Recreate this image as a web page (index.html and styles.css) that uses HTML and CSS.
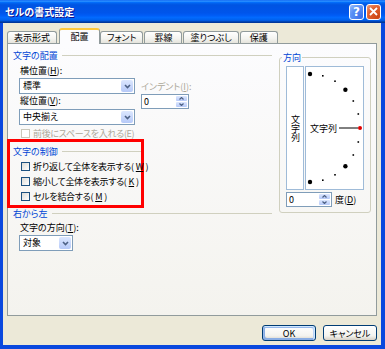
FILE: index.html
```html
<!DOCTYPE html>
<html lang="ja">
<head>
    <meta charset="UTF-8">
    <title>セルの書式設定</title>
    <link rel="stylesheet" href="styles.css">
</head>
<body>
    <div class="window">
        <div class="titlebar">
            <span class="title">セルの書式設定</span>
            <span class="tbtn help">?</span>
            <span class="tbtn close">
                <svg width="9" height="9" viewBox="0 0 9 9"><path d="M1 1L8 8M8 1L1 8" stroke="#fff" stroke-width="1.8"/></svg>
            </span>
        </div>
        <div class="frame">
            <div class="tabs">
                <span class="tab">表示形式</span>
                <span class="tab active">配置</span>
                <span class="tab">フォント</span>
                <span class="tab">罫線</span>
                <span class="tab">塗りつぶし</span>
                <span class="tab">保護</span>
            </div>
            <div class="panel">
                <div class="align-col">
                    <div class="group-head"><span>文字の配置</span></div>
                    <div class="pos-row">
                        <div class="pos-main">
                            <div class="field-label">横位置(<u>H</u>):</div>
                            <div class="combo wide"><span>標準</span><i class="drop"><svg width="7" height="5" viewBox="0 0 7 5"><path d="M1 1L3.5 3.5L6 1" fill="none" stroke="#4d6185" stroke-width="1.6"/></svg></i></div>
                            <div class="field-label gap">縦位置(<u>V</u>):</div>
                            <div class="combo wide low"><span>中央揃え</span><i class="drop"><svg width="7" height="5" viewBox="0 0 7 5"><path d="M1 1L3.5 3.5L6 1" fill="none" stroke="#4d6185" stroke-width="1.6"/></svg></i></div>
                        </div>
                        <div class="indent">
                            <div class="field-label disabled">インデント(<u>I</u>):</div>
                            <div class="spin"><span>0</span><i class="spin-btns"><b><svg width="5" height="3" viewBox="0 0 5 3"><path d="M0.5 2.5L2.5 0.5L4.5 2.5" fill="none" stroke="#4d6185" stroke-width="1.2"/></svg></b><b><svg width="5" height="3" viewBox="0 0 5 3"><path d="M0.5 0.5L2.5 2.5L4.5 0.5" fill="none" stroke="#4d6185" stroke-width="1.2"/></svg></b></i></div>
                        </div>
                    </div>
                    <label class="check disabled"><span class="box"></span>前後にスペースを入れる(E)</label>

                    <div class="highlight">
                        <div class="group-head"><span>文字の制御</span></div>
                        <label class="check"><span class="box"></span>折り返して全体を表示する(<u>W</u>)</label>
                        <label class="check"><span class="box"></span>縮小して全体を表示する(<u>K</u>)</label>
                        <label class="check"><span class="box"></span>セルを結合する(<u>M</u>)</label>
                    </div>

                    <div class="group-head"><span>右から左</span></div>
                    <div class="field-label tight">文字の方向(<u>T</u>):</div>
                    <div class="combo narrow"><span>対象</span><i class="drop"><svg width="7" height="5" viewBox="0 0 7 5"><path d="M1 1L3.5 3.5L6 1" fill="none" stroke="#4d6185" stroke-width="1.6"/></svg></i></div>
                </div>

                <fieldset class="orient">
                    <legend>方向</legend>
                    <div class="orient-boxes">
                        <div class="vtext"><span>文字列</span></div>
                        <div class="dial">
                            <svg width="57" height="122" viewBox="0 0 57 122">
                                <circle cx="4" cy="7" r="2.2"/>
                                <rect x="16" y="8" width="1.6" height="1.6"/>
                                <rect x="28.2" y="13.4" width="1.6" height="1.6"/>
                                <circle cx="39.4" cy="22.8" r="2.2"/>
                                <rect x="46.5" y="33.2" width="1.6" height="1.6"/>
                                <rect x="51.5" y="46.2" width="1.6" height="1.6"/>
                                <text x="4" y="64.5" font-size="9">文字列</text>
                                <line x1="33" y1="61" x2="52" y2="61" stroke="#000" stroke-width="1"/>
                                <circle cx="54" cy="61" r="2" fill="#e00000"/>
                                <rect x="51.5" y="74.2" width="1.6" height="1.6"/>
                                <rect x="46.5" y="87.2" width="1.6" height="1.6"/>
                                <circle cx="39.4" cy="99.2" r="2.2"/>
                                <rect x="28.2" y="107" width="1.6" height="1.6"/>
                                <rect x="16" y="112.4" width="1.6" height="1.6"/>
                                <circle cx="4" cy="115" r="2.2"/>
                            </svg>
                        </div>
                    </div>
                    <div class="degree">
                        <div class="spin short"><span>0</span><i class="spin-btns"><b><svg width="5" height="3" viewBox="0 0 5 3"><path d="M0.5 2.5L2.5 0.5L4.5 2.5" fill="none" stroke="#4d6185" stroke-width="1.2"/></svg></b><b><svg width="5" height="3" viewBox="0 0 5 3"><path d="M0.5 0.5L2.5 2.5L4.5 0.5" fill="none" stroke="#4d6185" stroke-width="1.2"/></svg></b></i></div>
                        <span>度(<u>D</u>)</span>
                    </div>
                </fieldset>
            </div>
            <div class="actions">
                <button class="btn default">OK</button>
                <button class="btn">キャンセル</button>
            </div>
        </div>
    </div>
</body>
</html>
```

FILE: styles.css
```css
* {
    box-sizing: border-box;
}
body {
    margin: 0;
    font-family: "Noto Sans CJK JP", "Noto Sans", sans-serif;
    font-size: 9px;
    font-feature-settings: "palt";
    color: #000;
    background: #fff;
}
u {
    text-decoration-thickness: 1px;
    text-underline-offset: 1px;
}
.window {
    width: 385px;
    height: 349px;
    display: flex;
    flex-direction: column;
}

/* タイトルバー */
.titlebar {
    height: 23px;
    flex: none;
    display: flex;
    align-items: center;
    padding: 0 4px 0 5px;
    background: linear-gradient(#0058ee 0%, #3593ff 4%, #288eff 6%, #127dff 8%, #036ffc 10%, #0262ee 14%, #0057e5 20%, #0054e3 24%, #0055eb 56%, #005bf5 66%, #026afe 76%, #0062ef 86%, #0052d6 92%, #0040ab 94%, #003092 100%);
}
.title {
    flex: 1;
    color: #fff;
    font-size: 10px;
    font-weight: bold;
    text-shadow: 1px 1px #0f1089;
}
.tbtn {
    width: 15px;
    height: 16px;
    border: 1px solid #fff;
    border-radius: 3px;
    display: flex;
    align-items: center;
    justify-content: center;
    color: #fff;
    font-family: "DejaVu Sans", sans-serif;
    font-size: 12px;
    font-weight: bold;
}
.help {
    margin-right: 2px;
    background: radial-gradient(circle at 85% 85%, #3c6fe8, #5990f6 60%, #a0c0fb);
}
.close {
    background: radial-gradient(circle at 85% 85%, #cc4614, #e0602f 60%, #f0a080);
}

/* 本体 */
.frame {
    flex: 1;
    display: flex;
    flex-direction: column;
    padding: 5px 4px 0 4px;
    background: #ece9d8;
    border-style: solid;
    border-color: #0a48de;
    border-width: 0 4px 4px 3px;
}
.tabs {
    height: 15px;
    display: flex;
    align-items: flex-end;
}
.tab {
    height: 12px;
    min-width: 38px;
    padding: 0 6px;
    margin-right: 1px;
    line-height: 11px;
    text-align: center;
    white-space: nowrap;
    border: 1px solid #919b9c;
    border-bottom: none;
    border-radius: 3px 3px 0 0;
    background: linear-gradient(#fff, #f3f3ef 60%, #e5e4dc);
}
.tab.active {
    height: 16px;
    min-width: 41px;
    margin: 0 0 -1px 1px;
    position: relative;
    z-index: 1;
    line-height: 13px;
    border-top: 2px solid #ffc83c;
    background: #fcfcfe;
    box-shadow: inset 0 -1px #fcfcfe;
}
.panel {
    height: 273px;
    display: flex;
    gap: 7px;
    padding: 6px 5px 0 0;
    border: 1px solid #919b9c;
    background: linear-gradient(#fcfcfe, #f4f3ee);
}

/* 左側 */
.align-col {
    width: 265px;
    display: flex;
    flex-direction: column;
    align-items: flex-start;
}
.group-head {
    align-self: stretch;
    height: 11px;
    line-height: 11px;
    display: flex;
    align-items: center;
    padding-left: 5px;
    color: #0046d5;
}
.group-head::after {
    content: "";
    flex: 1;
    height: 1px;
    margin-left: 4px;
    background: #d0d0bf;
}
.field-label {
    height: 10px;
    line-height: 10px;
    padding-left: 12px;
    white-space: nowrap;
}
.field-label.disabled {
    padding-left: 0;
    color: #aca899;
}
.field-label.tight {
    margin-top: 4px;
}
.pos-row {
    display: flex;
    margin-top: 5px;
}
.pos-main .field-label {
    padding-left: 1px;
}
.pos-main {
    padding-left: 11px;
}
.pos-main .gap {
    margin-top: 2px;
}
.combo {
    height: 16px;
    display: flex;
    align-items: stretch;
    margin-top: 2px;
    border: 1px solid #7f9db9;
    background: #fff;
}
.combo span {
    flex: 1;
    padding-left: 3px;
    line-height: 14px;
}
.combo.low {
    margin-top: 3px;
}
.combo.wide {
    width: 116px;
}
.combo.narrow {
    width: 54px;
    margin-left: 11px;
}
.drop {
    width: 12px;
    margin: 1px;
    border-radius: 2px;
    display: flex;
    align-items: center;
    justify-content: center;
    background: linear-gradient(#dce7fe, #b6c9f8);
}
.indent {
    margin-left: 6px;
    padding-top: 16px;
}
.spin {
    width: 48px;
    height: 15px;
    display: flex;
    margin-top: 2px;
    border: 1px solid #7f9db9;
    background: #fff;
}
.spin span {
    flex: 1;
    padding-left: 2px;
    line-height: 13px;
}
.spin-btns {
    width: 11px;
    margin: 1px;
    display: flex;
    flex-direction: column;
    gap: 1px;
}
.spin-btns b {
    flex: 1;
    display: flex;
    align-items: center;
    justify-content: center;
    border-radius: 1px;
    background: linear-gradient(#dce7fe, #b6c9f8);
}
.check {
    height: 10px;
    display: flex;
    align-items: center;
    gap: 2px;
    padding-left: 13px;
    margin-top: 3px;
    white-space: nowrap;
    letter-spacing: -0.3px;
}
.check .box {
    flex: none;
    width: 9px;
    height: 9px;
    margin-right: 1px;
    border: 1px solid #1c5180;
    background: linear-gradient(135deg, #dcdcd7, #fff);
}
.check.disabled {
    color: #aca899;
}
.check.disabled .box {
    border-color: #cac8bb;
    background: #fff;
}
.highlight {
    width: 137px;
    margin: 1px 0 0 -1px;
    padding: 4px 0 4px 0;
    border: 3px solid #ff0000;
}
.highlight .group-head {
    padding-left: 3px;
}
.highlight .check {
    padding-left: 11px;
    margin-top: 5px;
}
.highlight .check:first-of-type {
    margin-top: 4px;
}

/* 方向 */
.orient {
    width: 92px;
    height: 161px;
    margin: 2px 0 0 0;
    padding: 3px 6px 4px 6px;
    border: 1px solid #d0d0bf;
    border-radius: 3px;
}
.orient legend {
    padding: 0 1px;
    margin-left: -4px;
    line-height: 11px;
    color: #0046d5;
}
.orient-boxes {
    height: 124px;
    display: flex;
    gap: 1px;
}
.vtext, .dial {
    border: 1px solid #9fbbd8;
    background: #fff;
}
.vtext {
    width: 18px;
    display: flex;
    align-items: center;
    justify-content: center;
}
.vtext span {
    writing-mode: vertical-rl;
    line-height: 10px;
}
.dial {
    width: 59px;
}
.dial svg {
    display: block;
    font-family: "Noto Sans CJK JP", sans-serif;
}
.degree {
    display: flex;
    align-items: center;
    gap: 3px;
    margin-top: 2px;
}
.spin.short {
    width: 46px;
    margin-top: 0;
}

/* ボタン */
.actions {
    display: flex;
    justify-content: flex-end;
    gap: 7px;
    margin-top: 9px;
}
.btn {
    width: 54px;
    height: 16px;
    padding: 0;
    font: inherit;
    font-feature-settings: "palt";
    border: 1px solid #003c74;
    border-radius: 3px;
    background: linear-gradient(#fff, #f3f3ef 70%, #d6d0c5);
}
.btn.default {
    box-shadow: inset -1px 1px #cee7ff, inset 1px 2px #98b8ea, inset -2px 2px #bcd4f6, inset 1px -1px #89ade4, inset 2px -2px #89ade4;
}
```
